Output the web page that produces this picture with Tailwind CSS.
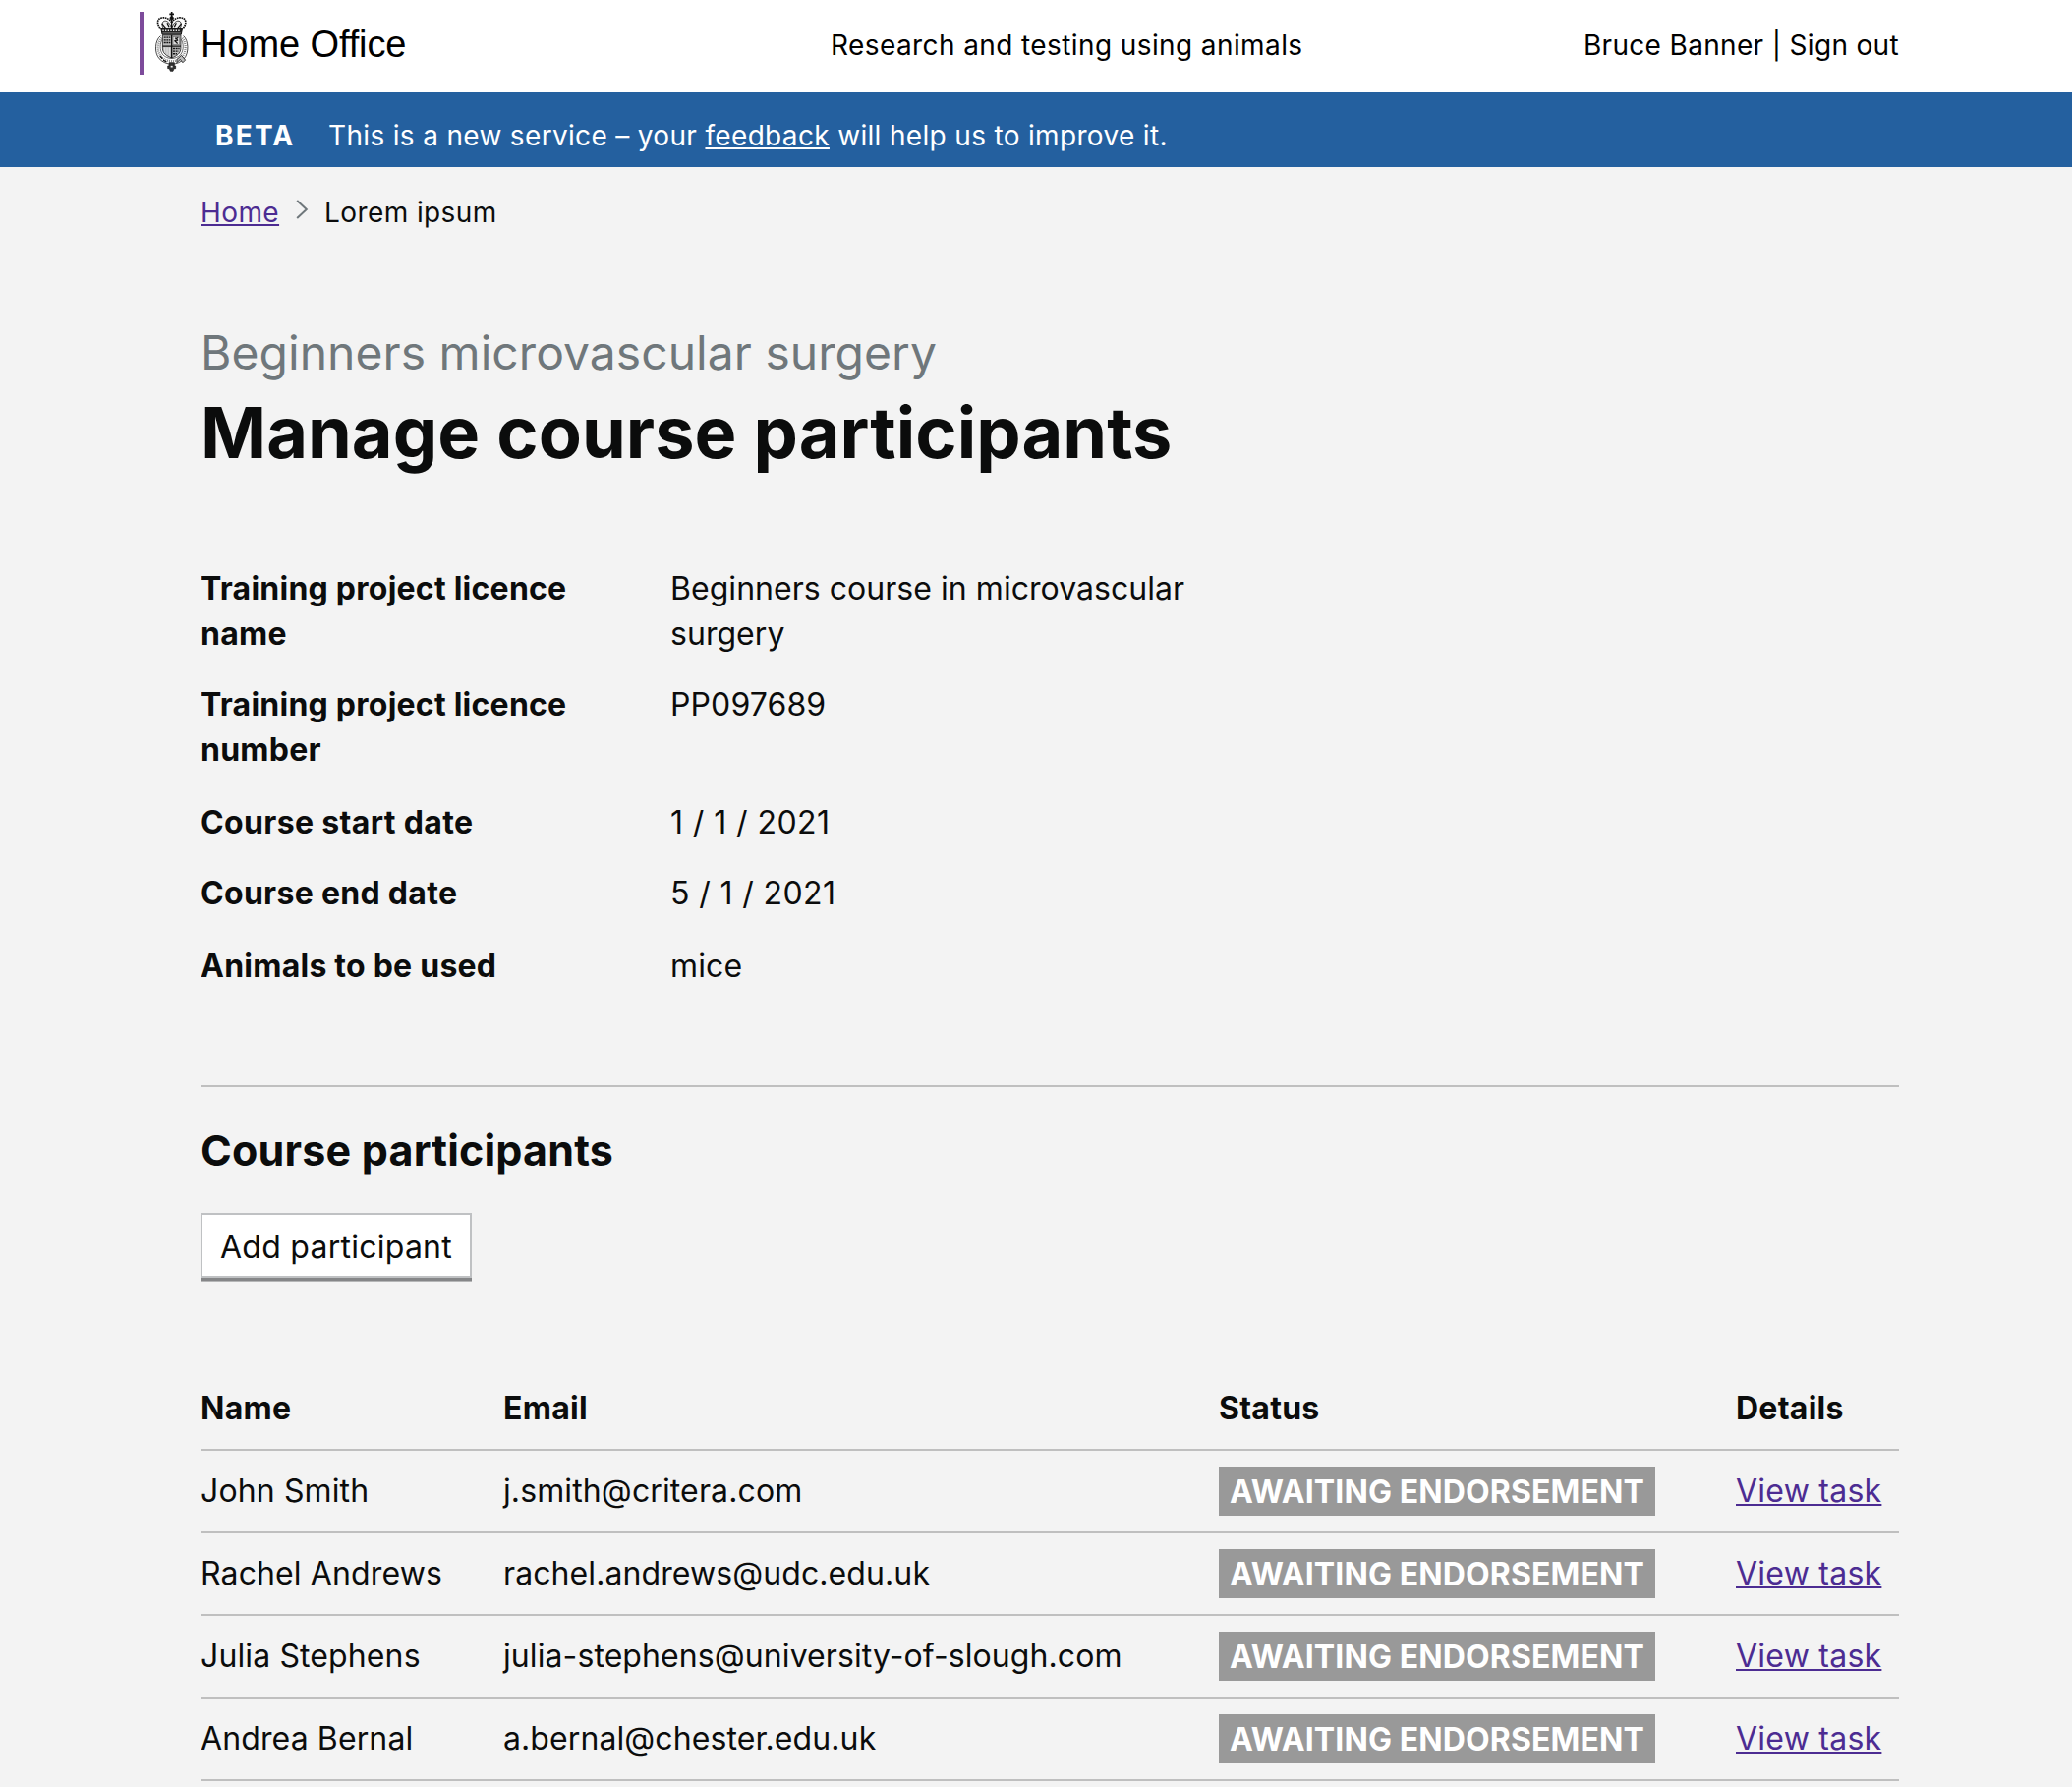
<!DOCTYPE html>
<html lang="en">
<head>
<meta charset="utf-8">
<title>Manage course participants</title>
<script src="https://cdn.jsdelivr.net/npm/@tailwindcss/browser@4"></script>
</head>
<body class="min-h-screen bg-[#f3f3f3] font-['Inter',sans-serif] text-[32px] leading-[46px] tracking-[0.12px] text-[#0b0c0c]">

<header class="flex h-[94px] items-center bg-white pr-[176px] pb-[2px] pl-[142px] text-[28px] leading-10 tracking-[0.4px] text-black">
  <div class="flex w-[703px] items-center">
    <span class="mt-[-4px] h-16 w-1 bg-[#7d4b9b]"></span>
    <svg class="mt-[-7px] ml-3 h-[61px] w-[34px]" viewBox="84 36 102 184" fill="none" stroke="#111" stroke-width="3">
      <!-- crown -->
      <path d="M134 36v16M127 43h14" stroke-width="5"/>
      <circle cx="134" cy="55" r="5" fill="#111"/>
      <path d="M104 90C86 76 88 56 104 54c14-2 26 6 30 16 4-10 16-18 30-16 16 2 18 22 0 36" stroke-dasharray="5 2" stroke-width="5"/>
      <path d="M110 88c-8-10-6-22 2-24 10-2 18 10 22 22 4-12 12-24 22-22 8 2 10 14 2 24" fill="#eee" stroke-width="2.5"/>
      <path d="M134 60v30M104 72l12 14M164 72l-12 14M120 70l6 12M148 70l-6 12" stroke-width="4"/>
      <path d="M101 86h66l-4 20h-58z" fill="#222"/>
      <path d="M106 94h56" stroke="#eee" stroke-width="4" stroke-dasharray="4 4"/>
      <path d="M106 102h56" stroke="#aaa" stroke-width="2"/>
      <!-- garter -->
      <path d="M100 110C82 124 80 162 96 180c20 22 56 22 76 0 16-18 14-56-2-70" stroke="#222" stroke-width="2.5"/>
      <path d="M103 116C89 130 88 158 102 174c18 18 46 18 64 0 14-16 13-44 0-58" stroke="#888" stroke-width="7" stroke-dasharray="3 3"/>
      <path d="M106 120C97 132 96 154 107 168c15 15 39 15 54 0 11-14 10-36 1-48" stroke="#222" stroke-width="2"/>
      <!-- shield -->
      <path d="M106 108h56v40c0 16-14 24-28 30-14-6-28-14-28-30z" fill="#bbb" stroke="#222" stroke-width="2.5"/>
      <path d="M134 108v70M106 142h56" stroke-width="4"/>
      <path d="M110 115h20M110 123h20M110 131h20" stroke-width="4" stroke-dasharray="6 2"/>
      <path d="M138 113h20v24h-20z" fill="#ddd" stroke="#666" stroke-width="2"/>
      <path d="M144 118h6l4-3M148 118l4 6-6 4 6 6M142 126l6-2" stroke-width="3.5"/>
      <path d="M113 146v16M120 146v22M127 146v26" stroke="#eee" stroke-width="2.5"/>
      <path d="M138 149h20M138 157h17M138 165h12" stroke-width="4" stroke-dasharray="6 2"/>
      <!-- buckle and pendant -->
      <path d="M150 182l14-12 12 14-8 8-8-10-10 10z" fill="#bbb" stroke-width="2.5"/>
      <path d="M108 184l10 6M98 172l8 8" stroke-width="4"/>
      <path d="M126 192h16v10h4v8h-5l-3 8h-8l-3-8h-5v-8h4z" fill="#333" stroke-width="2"/>
      <path d="M131 204h6" stroke="#eee" stroke-width="5"/>
    </svg>
    <span class="mt-[-3px] ml-3 font-['Liberation_Sans',sans-serif] text-[38px] tracking-[-0.1px]">Home Office</span>
  </div>
  <p class="flex-1">Research and testing using animals</p>
  <p class="tracking-[0.33px]">Bruce Banner | Sign out</p>
</header>

<div class="flex h-[76px] items-center bg-[#24609f] pt-3 pl-[219px] text-[28px] leading-10 tracking-[0.33px] text-white">
  <strong class="w-[115px] font-bold tracking-[2.2px]">BETA</strong>
  <p>This is a new service – your <a class="underline decoration-2 underline-offset-2">feedback</a> will help us to improve it.</p>
</div>

<main class="pr-[176px] pl-[204px]">
  <nav class="flex items-center pt-[26px] text-[28px] leading-10 tracking-[0.4px]">
    <a class="text-[#4c2c92] underline decoration-2 underline-offset-2">Home</a>
    <svg class="mt-[-6px] mr-[16px] ml-[17px] h-5 w-[13px]" viewBox="0 0 13 20" fill="none" stroke="#6f777b" stroke-width="2"><path d="M1.2 1l9.6 9-9.6 9"/></svg>
    <span>Lorem ipsum</span>
  </nav>

  <p class="mt-[93px] text-[48px] leading-[60px] tracking-[0.05px] text-[#6f777b]">Beginners microvascular surgery</p>
  <h1 class="mt-[11px] text-[72px] leading-[80px] font-bold tracking-[0.05px]">Manage course participants</h1>

  <dl class="mt-24 grid grid-cols-[478px_560px]">
    <dt class="mb-[26px] w-[400px] font-bold tracking-[0.24px]">Training project licence name</dt><dd class="tracking-[0.04px]">Beginners course in microvascular surgery</dd>
    <dt class="mb-7 w-[400px] font-bold tracking-[0.24px]">Training project licence number</dt><dd>PP097689</dd>
    <dt class="mb-[26px] font-bold tracking-[0.35px]">Course start date</dt><dd class="tracking-[0.42px]">1 / 1 / 2021</dd>
    <dt class="mb-7 font-bold tracking-[0.3px]">Course end date</dt><dd class="tracking-[0.38px]">5 / 1 / 2021</dd>
    <dt class="font-bold tracking-[0.24px]">Animals to be used</dt><dd>mice</dd>
  </dl>

  <section class="mt-[98px] border-t-2 border-[#bfbfbf] pt-[38px]">
    <h2 class="text-[43px] leading-[52px] font-bold tracking-[0.2px]">Course participants</h2>
    <button class="mt-[38px] block h-[66px] w-[276px] border-2 border-[#bfc1c3] bg-white pt-[3px] leading-[58px] tracking-[0.25px] shadow-[0_3px_0_#858688,0_4px_0_#b5b6b7]">Add participant</button>

    <div class="mt-[92px]">
      <div class="grid h-[84px] grid-cols-[308px_728px_526px_1fr] items-center border-b-2 border-[#bfbfbf] font-bold tracking-[0.26px]">
        <span>Name</span><span>Email</span><span>Status</span><span>Details</span>
      </div>
      <div class="grid h-[84px] grid-cols-[308px_728px_526px_1fr] items-center border-b-2 border-[#bfbfbf]">
        <span>John Smith</span><span>j.smith@critera.com</span><span class="h-[50px] w-[444px] bg-[#999] text-center leading-[52px] font-bold tracking-[0.12px] text-white">AWAITING ENDORSEMENT</span><a class="tracking-[0.25px] text-[#4c2c92] underline decoration-2 underline-offset-2">View task</a>
      </div>
      <div class="grid h-[84px] grid-cols-[308px_728px_526px_1fr] items-center border-b-2 border-[#bfbfbf]">
        <span>Rachel Andrews</span><span class="tracking-[0.09px]">rachel.andrews@udc.edu.uk</span><span class="h-[50px] w-[444px] bg-[#999] text-center leading-[52px] font-bold tracking-[0.12px] text-white">AWAITING ENDORSEMENT</span><a class="tracking-[0.25px] text-[#4c2c92] underline decoration-2 underline-offset-2">View task</a>
      </div>
      <div class="grid h-[84px] grid-cols-[308px_728px_526px_1fr] items-center border-b-2 border-[#bfbfbf]">
        <span>Julia Stephens</span><span class="tracking-[0.09px]">julia-stephens@university-of-slough.com</span><span class="h-[50px] w-[444px] bg-[#999] text-center leading-[52px] font-bold tracking-[0.12px] text-white">AWAITING ENDORSEMENT</span><a class="tracking-[0.25px] text-[#4c2c92] underline decoration-2 underline-offset-2">View task</a>
      </div>
      <div class="grid h-[84px] grid-cols-[308px_728px_526px_1fr] items-center border-b-2 border-[#bfbfbf]">
        <span>Andrea Bernal</span><span class="tracking-[0.09px]">a.bernal@chester.edu.uk</span><span class="h-[50px] w-[444px] bg-[#999] text-center leading-[52px] font-bold tracking-[0.12px] text-white">AWAITING ENDORSEMENT</span><a class="tracking-[0.25px] text-[#4c2c92] underline decoration-2 underline-offset-2">View task</a>
      </div>
    </div>
  </section>
</main>
</body>
</html>
